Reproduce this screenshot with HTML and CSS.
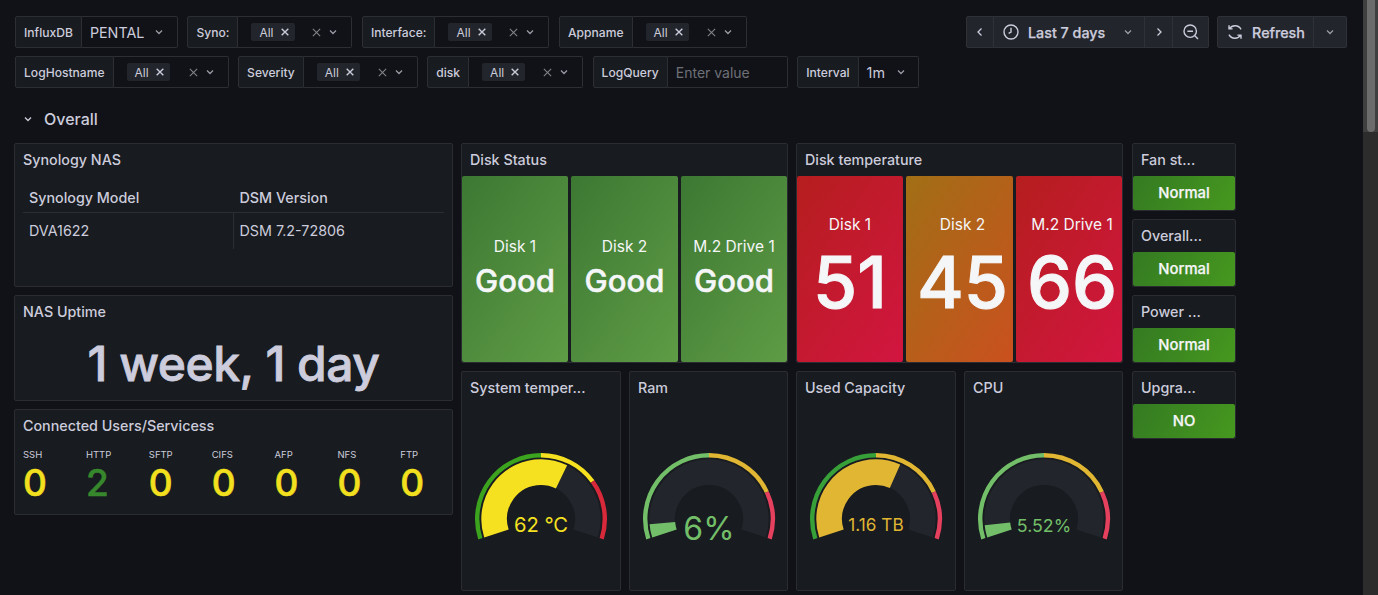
FILE: index.html
```html
<!DOCTYPE html>
<html lang="en">
<head>
<meta charset="utf-8">
<title>Synology NAS</title>
<link rel="stylesheet" href="styles.css">
</head>
<body>
<svg class="defs" width="0" height="0" aria-hidden="true">
  <symbol id="chev" viewBox="0 0 12 12"><path d="M3 4.5 6 7.5 9 4.5"/></symbol>
  <symbol id="cross" viewBox="0 0 12 12"><path d="M2 2 10 10M10 2 2 10"/></symbol>
</svg>
<div class="page">
<main class="content">
  <div class="toolbar">
    <div class="var-rows">
      <div class="var-row">
        <div class="var"><span class="var-label">InfluxDB</span><div class="var-value w-96"><span class="plain">PENTAL</span><svg class="ic-chev"><use href="#chev"/></svg></div></div>
        <div class="var"><span class="var-label">Syno:</span><div class="var-value w-114"><span class="chip">All<svg class="ic-x"><use href="#cross"/></svg></span><span class="push"></span><svg class="ic-clear"><use href="#cross"/></svg><svg class="ic-chev"><use href="#chev"/></svg></div></div>
        <div class="var"><span class="var-label">Interface:</span><div class="var-value w-114"><span class="chip">All<svg class="ic-x"><use href="#cross"/></svg></span><span class="push"></span><svg class="ic-clear"><use href="#cross"/></svg><svg class="ic-chev"><use href="#chev"/></svg></div></div>
        <div class="var"><span class="var-label">Appname</span><div class="var-value w-114"><span class="chip">All<svg class="ic-x"><use href="#cross"/></svg></span><span class="push"></span><svg class="ic-clear"><use href="#cross"/></svg><svg class="ic-chev"><use href="#chev"/></svg></div></div>
      </div>
      <div class="var-row">
        <div class="var"><span class="var-label">LogHostname</span><div class="var-value w-115"><span class="chip">All<svg class="ic-x"><use href="#cross"/></svg></span><span class="push"></span><svg class="ic-clear"><use href="#cross"/></svg><svg class="ic-chev"><use href="#chev"/></svg></div></div>
        <div class="var"><span class="var-label">Severity</span><div class="var-value w-114"><span class="chip">All<svg class="ic-x"><use href="#cross"/></svg></span><span class="push"></span><svg class="ic-clear"><use href="#cross"/></svg><svg class="ic-chev"><use href="#chev"/></svg></div></div>
        <div class="var"><span class="var-label">disk</span><div class="var-value w-114"><span class="chip">All<svg class="ic-x"><use href="#cross"/></svg></span><span class="push"></span><svg class="ic-clear"><use href="#cross"/></svg><svg class="ic-chev"><use href="#chev"/></svg></div></div>
        <div class="var"><span class="var-label">LogQuery</span><div class="var-value w-120"><span class="placeholder">Enter value</span></div></div>
        <div class="var"><span class="var-label">Interval</span><div class="var-value w-60"><span class="plain">1m</span><svg class="ic-chev"><use href="#chev"/></svg></div></div>
      </div>
    </div>
    <div class="actions">
      <div class="btn-group">
        <span class="btn btn-nav"><svg class="ic-nav" viewBox="0 0 12 12"><path d="M7.5 2.5 4 6l3.5 3.5"/></svg></span>
        <span class="btn btn-time"><svg class="ic-18" viewBox="0 0 18 18"><circle cx="9" cy="9" r="7"/><path d="M9 4.8V9L6.6 10.4"/></svg><span class="btn-text">Last 7 days</span><svg class="ic-chev"><use href="#chev"/></svg></span>
        <span class="btn btn-nav"><svg class="ic-nav" viewBox="0 0 12 12"><path d="M4.5 2.5 8 6 4.5 9.5"/></svg></span>
        <span class="btn btn-zoom"><svg class="ic-18" viewBox="0 0 18 18"><circle cx="8.2" cy="8.2" r="6.2"/><path d="M5.4 8.2H11M12.8 12.8 16 16"/></svg></span>
      </div>
      <div class="btn-group">
        <span class="btn btn-refresh"><svg class="ic-18" viewBox="0 0 24 24"><path d="M4 3v4.8h4.8M4.5 7.8A9 9 0 0 1 20 8.5M20 21v-4.8h-4.8M19.5 16.2A9 9 0 0 1 4 15.5"/></svg><span class="btn-text">Refresh</span></span>
        <span class="btn btn-more"><svg class="ic-chev"><use href="#chev"/></svg></span>
      </div>
    </div>
  </div>

  <div class="row-head"><svg class="ic-chev"><use href="#chev"/></svg><span>Overall</span></div>

  <div class="dash">
    <div class="col col-left">
      <section class="panel h-144">
        <h2 class="panel-title">Synology NAS</h2>
        <div class="table">
          <div class="cell th">Synology Model</div><div class="cell th">DSM Version</div>
          <div class="cell td">DVA1622</div><div class="cell td">DSM 7.2-72806</div>
        </div>
      </section>
      <section class="panel h-106">
        <h2 class="panel-title">NAS Uptime</h2>
        <div class="uptime">1 week, 1 day</div>
      </section>
      <section class="panel h-106">
        <h2 class="panel-title">Connected Users/Servicess</h2>
        <div class="services">
          <div class="svc"><span class="svc-name">SSH</span><span class="svc-val">0</span></div>
          <div class="svc"><span class="svc-name">HTTP</span><span class="svc-val svc-green">2</span></div>
          <div class="svc"><span class="svc-name">SFTP</span><span class="svc-val">0</span></div>
          <div class="svc"><span class="svc-name">CIFS</span><span class="svc-val">0</span></div>
          <div class="svc"><span class="svc-name">AFP</span><span class="svc-val">0</span></div>
          <div class="svc"><span class="svc-name">NFS</span><span class="svc-val">0</span></div>
          <div class="svc"><span class="svc-name">FTP</span><span class="svc-val">0</span></div>
        </div>
      </section>
    </div>

    <div class="col col-mid">
      <section class="panel h-220">
        <h2 class="panel-title">Disk Status</h2>
        <div class="tiles">
          <div class="tile tile-green"><span class="tile-name">Disk 1</span><span class="tile-word">Good</span></div>
          <div class="tile tile-green"><span class="tile-name">Disk 2</span><span class="tile-word">Good</span></div>
          <div class="tile tile-green"><span class="tile-name">M.2 Drive 1</span><span class="tile-word">Good</span></div>
        </div>
      </section>
      <div class="gauges">
        <section class="panel h-220">
          <h2 class="panel-title">System temper...</h2>
          <svg class="gauge" viewBox="0 0 134 100" width="134" height="100">
            <path class="ring c-g1" pathLength="216" stroke-dasharray="108 216" d="M6.32 87.71A63.8 63.8 0 1 1 127.68 87.71"/>
            <path class="ring c-y1" pathLength="216" stroke-dasharray="54 216" stroke-dashoffset="-108" d="M6.32 87.71A63.8 63.8 0 1 1 127.68 87.71"/>
            <path class="ring c-r1" pathLength="216" stroke-dasharray="54 216" stroke-dashoffset="-162" d="M6.32 87.71A63.8 63.8 0 1 1 127.68 87.71"/>
            <path class="track" d="M22.44 82.48A46.85 46.85 0 1 1 111.56 82.48"/>
            <path class="bar c-y1" pathLength="216" stroke-dasharray="134 216" d="M22.44 82.48A46.85 46.85 0 1 1 111.56 82.48"/>
            <text class="g-text f-y1 fs-21" x="67" y="81">62 °C</text>
          </svg>
        </section>
        <section class="panel h-220">
          <h2 class="panel-title">Ram</h2>
          <svg class="gauge" viewBox="0 0 134 100" width="134" height="100">
            <path class="ring c-g2" pathLength="216" stroke-dasharray="108 216" d="M6.32 87.71A63.8 63.8 0 1 1 127.68 87.71"/>
            <path class="ring c-y2" pathLength="216" stroke-dasharray="65 216" stroke-dashoffset="-108" d="M6.32 87.71A63.8 63.8 0 1 1 127.68 87.71"/>
            <path class="ring c-r2" pathLength="216" stroke-dasharray="43 216" stroke-dashoffset="-173" d="M6.32 87.71A63.8 63.8 0 1 1 127.68 87.71"/>
            <path class="track" d="M22.44 82.48A46.85 46.85 0 1 1 111.56 82.48"/>
            <path class="bar c-g2" pathLength="216" stroke-dasharray="13 216" d="M22.44 82.48A46.85 46.85 0 1 1 111.56 82.48"/>
            <text class="g-text f-g2 fs-32" x="67" y="89">6%</text>
          </svg>
        </section>
      </div>
    </div>

    <div class="col col-mid">
      <section class="panel h-220">
        <h2 class="panel-title">Disk temperature</h2>
        <div class="tiles">
          <div class="tile tile-red"><span class="tile-name name-tall">Disk 1</span><span class="tile-num">51</span></div>
          <div class="tile tile-orange shift"><span class="tile-name name-tall">Disk 2</span><span class="tile-num">45</span></div>
          <div class="tile tile-red shift"><span class="tile-name name-tall">M.2 Drive 1</span><span class="tile-num">66</span></div>
        </div>
      </section>
      <div class="gauges">
        <section class="panel h-220">
          <h2 class="panel-title">Used Capacity</h2>
          <svg class="gauge" viewBox="0 0 134 100" width="134" height="100">
            <path class="ring c-g3" pathLength="216" stroke-dasharray="108 216" d="M6.32 87.71A63.8 63.8 0 1 1 127.68 87.71"/>
            <path class="ring c-y2" pathLength="216" stroke-dasharray="65 216" stroke-dashoffset="-108" d="M6.32 87.71A63.8 63.8 0 1 1 127.68 87.71"/>
            <path class="ring c-r2" pathLength="216" stroke-dasharray="43 216" stroke-dashoffset="-173" d="M6.32 87.71A63.8 63.8 0 1 1 127.68 87.71"/>
            <path class="track" d="M22.44 82.48A46.85 46.85 0 1 1 111.56 82.48"/>
            <path class="bar c-y2" pathLength="216" stroke-dasharray="132 216" d="M22.44 82.48A46.85 46.85 0 1 1 111.56 82.48"/>
            <text class="g-text f-y2 fs-18" x="67" y="80">1.16 TB</text>
          </svg>
        </section>
        <section class="panel h-220">
          <h2 class="panel-title">CPU</h2>
          <svg class="gauge" viewBox="0 0 134 100" width="134" height="100">
            <path class="ring c-g2" pathLength="216" stroke-dasharray="108 216" d="M6.32 87.71A63.8 63.8 0 1 1 127.68 87.71"/>
            <path class="ring c-y2" pathLength="216" stroke-dasharray="65 216" stroke-dashoffset="-108" d="M6.32 87.71A63.8 63.8 0 1 1 127.68 87.71"/>
            <path class="ring c-r2" pathLength="216" stroke-dasharray="43 216" stroke-dashoffset="-173" d="M6.32 87.71A63.8 63.8 0 1 1 127.68 87.71"/>
            <path class="track" d="M22.44 82.48A46.85 46.85 0 1 1 111.56 82.48"/>
            <path class="bar c-g2" pathLength="216" stroke-dasharray="12 216" d="M22.44 82.48A46.85 46.85 0 1 1 111.56 82.48"/>
            <text class="g-text f-g2 fs-19" x="67" y="80.5">5.52%</text>
          </svg>
        </section>
      </div>
    </div>

    <div class="col col-right">
      <section class="panel h-68"><h2 class="panel-title">Fan st...</h2><div class="mini">Normal</div></section>
      <section class="panel h-68"><h2 class="panel-title">Overall...</h2><div class="mini">Normal</div></section>
      <section class="panel h-68"><h2 class="panel-title">Power ...</h2><div class="mini">Normal</div></section>
      <section class="panel h-68"><h2 class="panel-title">Upgra...</h2><div class="mini">NO</div></section>
    </div>
  </div>
</main>
<div class="scrollbar"><div class="thumb"></div></div>
</div>
</body>
</html>
```

FILE: styles.css
```css
* { box-sizing: border-box; }
html, body { margin: 0; height: 100%; overflow: hidden; }
body {
  background: #111217;
  color: #ccccdc;
  font-family: Inter, "Liberation Sans", sans-serif;
  font-size: 14.3px;
}
.defs { position: absolute; }
.page { display: flex; height: 595px; overflow: hidden; }
.content { width: 1363px; flex: none; padding: 16px 0 0 15px; }

/* toolbar */
.toolbar { display: flex; justify-content: space-between; padding-right: 16px; }
.var-rows { display: flex; flex-direction: column; gap: 8px; }
.var-row { display: flex; gap: 9.5px; }
.var { display: flex; height: 32px; }
.var-label {
  display: flex; align-items: center;
  padding: 0 8px;
  background: #181b1f;
  border: 1px solid #2c2e33;
  border-radius: 2px 0 0 2px;
  font-size: 12.1px; font-weight: 500;
  white-space: nowrap;
}
.var-value {
  display: flex; align-items: center;
  border: 1px solid #2c2e33; border-left: 0;
  border-radius: 0 2px 2px 0;
  padding: 0 12px 0 13px;
}
.w-60 { width: 60px; padding: 0 11px 0 8px; }
.w-96 { width: 96px; padding-left: 8px; }
.w-114 { width: 114px; }
.w-115 { width: 115px; }
.w-120 { width: 120px; padding-left: 8px; }
.plain { flex: 1; font-size: 14.3px; }
.placeholder { font-size: 14px; color: #6e7077; }
.push { flex: 1; }
.chip {
  display: flex; align-items: center; gap: 6px;
  height: 18px; padding: 0 5px 0 8px;
  background: #22252b; border-radius: 2px;
  font-size: 12px; font-weight: 400;
}
.ic-x { width: 10px; height: 10px; fill: none; stroke: #ccccdc; stroke-width: 1.6; }
.ic-clear { width: 11px; height: 11px; fill: none; stroke: #85868d; stroke-width: 1.1; margin-right: 5px; }
.ic-chev { width: 12px; height: 12px; fill: none; stroke: #9a9ba6; stroke-width: 1.3; flex: none; }

.actions { display: flex; gap: 8px; align-items: flex-start; }
.btn-group { display: flex; height: 32px; }
.btn {
  display: flex; align-items: center; justify-content: center;
  height: 32px;
  background: #22252b;
  border: 1px solid #2f3137;
  border-left-width: 0;
  color: #ccccdc;
}
.btn:first-child { border-left-width: 1px; border-radius: 2px 0 0 2px; }
.btn:last-child { border-radius: 0 2px 2px 0; }
.btn-nav { width: 28px; }
.btn-time { width: 151px; gap: 8px; justify-content: flex-start; padding-left: 8px; }
.btn-zoom { width: 36px; }
.btn-refresh { width: 97px; gap: 8px; }
.btn-more { width: 33px; }
.btn-text { font-size: 14.3px; font-weight: 500; -webkit-text-stroke: 0.25px currentColor; white-space: nowrap; }
.btn-time .ic-chev { margin-left: 9px; }
.ic-18 { width: 18px; height: 18px; fill: none; stroke: #ccccdc; stroke-width: 1.4; flex: none; }
.btn-refresh .ic-18 { stroke-width: 1.9; }
.ic-nav { width: 12px; height: 12px; fill: none; stroke: #ccccdc; stroke-width: 1.3; }

/* row header */
.row-head {
  display: flex; align-items: center; gap: 10px;
  height: 31px; margin-top: 15px; padding-left: 7px;
  font-size: 16px; font-weight: 500;
}
.row-head .ic-chev { stroke: #ccccdc; }

/* grid */
.dash { display: flex; margin-top: 9px; margin-left: -1px; gap: 8px; }
.col { display: flex; flex-direction: column; gap: 8px; flex: none; }
.col-left { width: 439px; }
.col-mid { width: 327px; }
.col-right { width: 104px; margin-left: 1px; }
.gauges { display: grid; grid-template-columns: 160px 159px; gap: 8px; }

.panel {
  display: flex; flex-direction: column;
  background: #181b1f;
  border: 1px solid #2a2c31;
  border-radius: 2px;
  overflow: hidden;
}
.h-144 { height: 144px; }
.h-106 { height: 106px; }
.h-220 { height: 220px; }
.h-68 { height: 68px; }
.panel-title {
  margin: 0; flex: none;
  height: 32px; line-height: 32px; padding: 0 8px;
  font-size: 14.3px; font-weight: 500;
  color: #ccccdc;
  white-space: nowrap;
}

/* table */
.table {
  display: grid; grid-template-columns: 210.5px 1fr;
  margin: 6px 8px 0;
}
.cell { padding: 0 6px; display: flex; align-items: center; }
.th { height: 31px; font-weight: 500; border-bottom: 1px solid #2c2e33; }
.td { height: 36px; font-weight: 400; padding-bottom: 2px; }
.td:nth-child(3) { border-right: 1px solid #2c2e33; }

/* uptime */
.uptime {
  flex: 1; display: flex; justify-content: center; align-items: center;
  font-size: 48px; font-weight: 500; line-height: 1; letter-spacing: -0.5px;
  -webkit-text-stroke: 0.8px currentColor;
  color: #ccccdc; white-space: nowrap;
}

/* services */
.services { display: grid; grid-template-columns: repeat(7, 62.9px); padding: 7px 8px 0; }
.svc { display: flex; flex-direction: column; }
.svc-name { font-size: 9.5px; line-height: 12px; font-weight: 400; }
.svc-val { font-size: 37px; line-height: 44px; font-weight: 500; -webkit-text-stroke: 0.6px currentColor; color: #f2e01f; }
.svc-green { color: #37872d; }

/* stat tiles */
.tiles {
  flex: 1; display: grid; grid-template-columns: 106px 107px 106px;
  gap: 3px;
}
.tile {
  display: flex; flex-direction: column; align-items: center; justify-content: center;
  color: #f5f6f8; border-radius: 2px;
  white-space: nowrap; overflow: hidden;
}
.shift { padding-left: 6px; }
.tile-green { background: linear-gradient(125deg, #3d7833, #5f9c45); }
.tile-red { background: linear-gradient(125deg, #b51e1e, #d21540); }
.tile-orange { background: linear-gradient(125deg, #a16f15, #ca501f); }
.tile-name { font-size: 15.5px; line-height: 20px; font-weight: 400; margin-bottom: 3px; }
.tile-word { font-size: 31px; line-height: 42px; font-weight: 500; -webkit-text-stroke: 0.5px currentColor; }
.tile-num { font-size: 71.5px; line-height: 84px; font-weight: 500; -webkit-text-stroke: 1px currentColor; }
.name-tall { margin-bottom: 5px; }

/* gauges */
.gauge { display: block; margin: 47px auto 0; flex: none; }
.ring { fill: none; stroke-width: 4.4; }
.track { fill: none; stroke: #22252b; stroke-width: 25.7; }
.bar { fill: none; stroke-width: 25.7; }
.c-g1 { stroke: #3ca31f; }
.c-y1 { stroke: #f5e11f; }
.c-r1 { stroke: #d8293b; }
.c-g2 { stroke: #73bf69; }
.c-y2 { stroke: #e0b633; }
.c-r2 { stroke: #e5405e; }
.c-g3 { stroke: #37a038; }
.g-text { text-anchor: middle; font-family: Inter, "Liberation Sans", sans-serif; font-weight: 400; }
.f-y1 { fill: #f5e11f; }
.f-y2 { fill: #e0b633; }
.f-g2 { fill: #73bf69; }
.fs-18 { font-size: 17.2px; }
.fs-19 { font-size: 17.8px; }
.fs-21 { font-size: 20.2px; }
.fs-32 { font-size: 32px; }

/* mini stat */
.mini {
  flex: 1; display: flex; align-items: center; justify-content: center;
  padding-bottom: 1px;
  background: linear-gradient(120deg, #347a22, #46981f);
  color: #f5f6f8;
  font-size: 14.8px; font-weight: 500;
  -webkit-text-stroke: 0.25px currentColor;
  border-radius: 2px;
}

/* scrollbar */
.scrollbar {
  width: 15px; flex: none;
  background: linear-gradient(#3f3f3f 0 132px, #2c2c2c 132px);
  padding: 0 3px 0 4px;
}
.thumb { height: 132px; background: #6c6c6c; border-radius: 0 0 4px 4px; }
```
